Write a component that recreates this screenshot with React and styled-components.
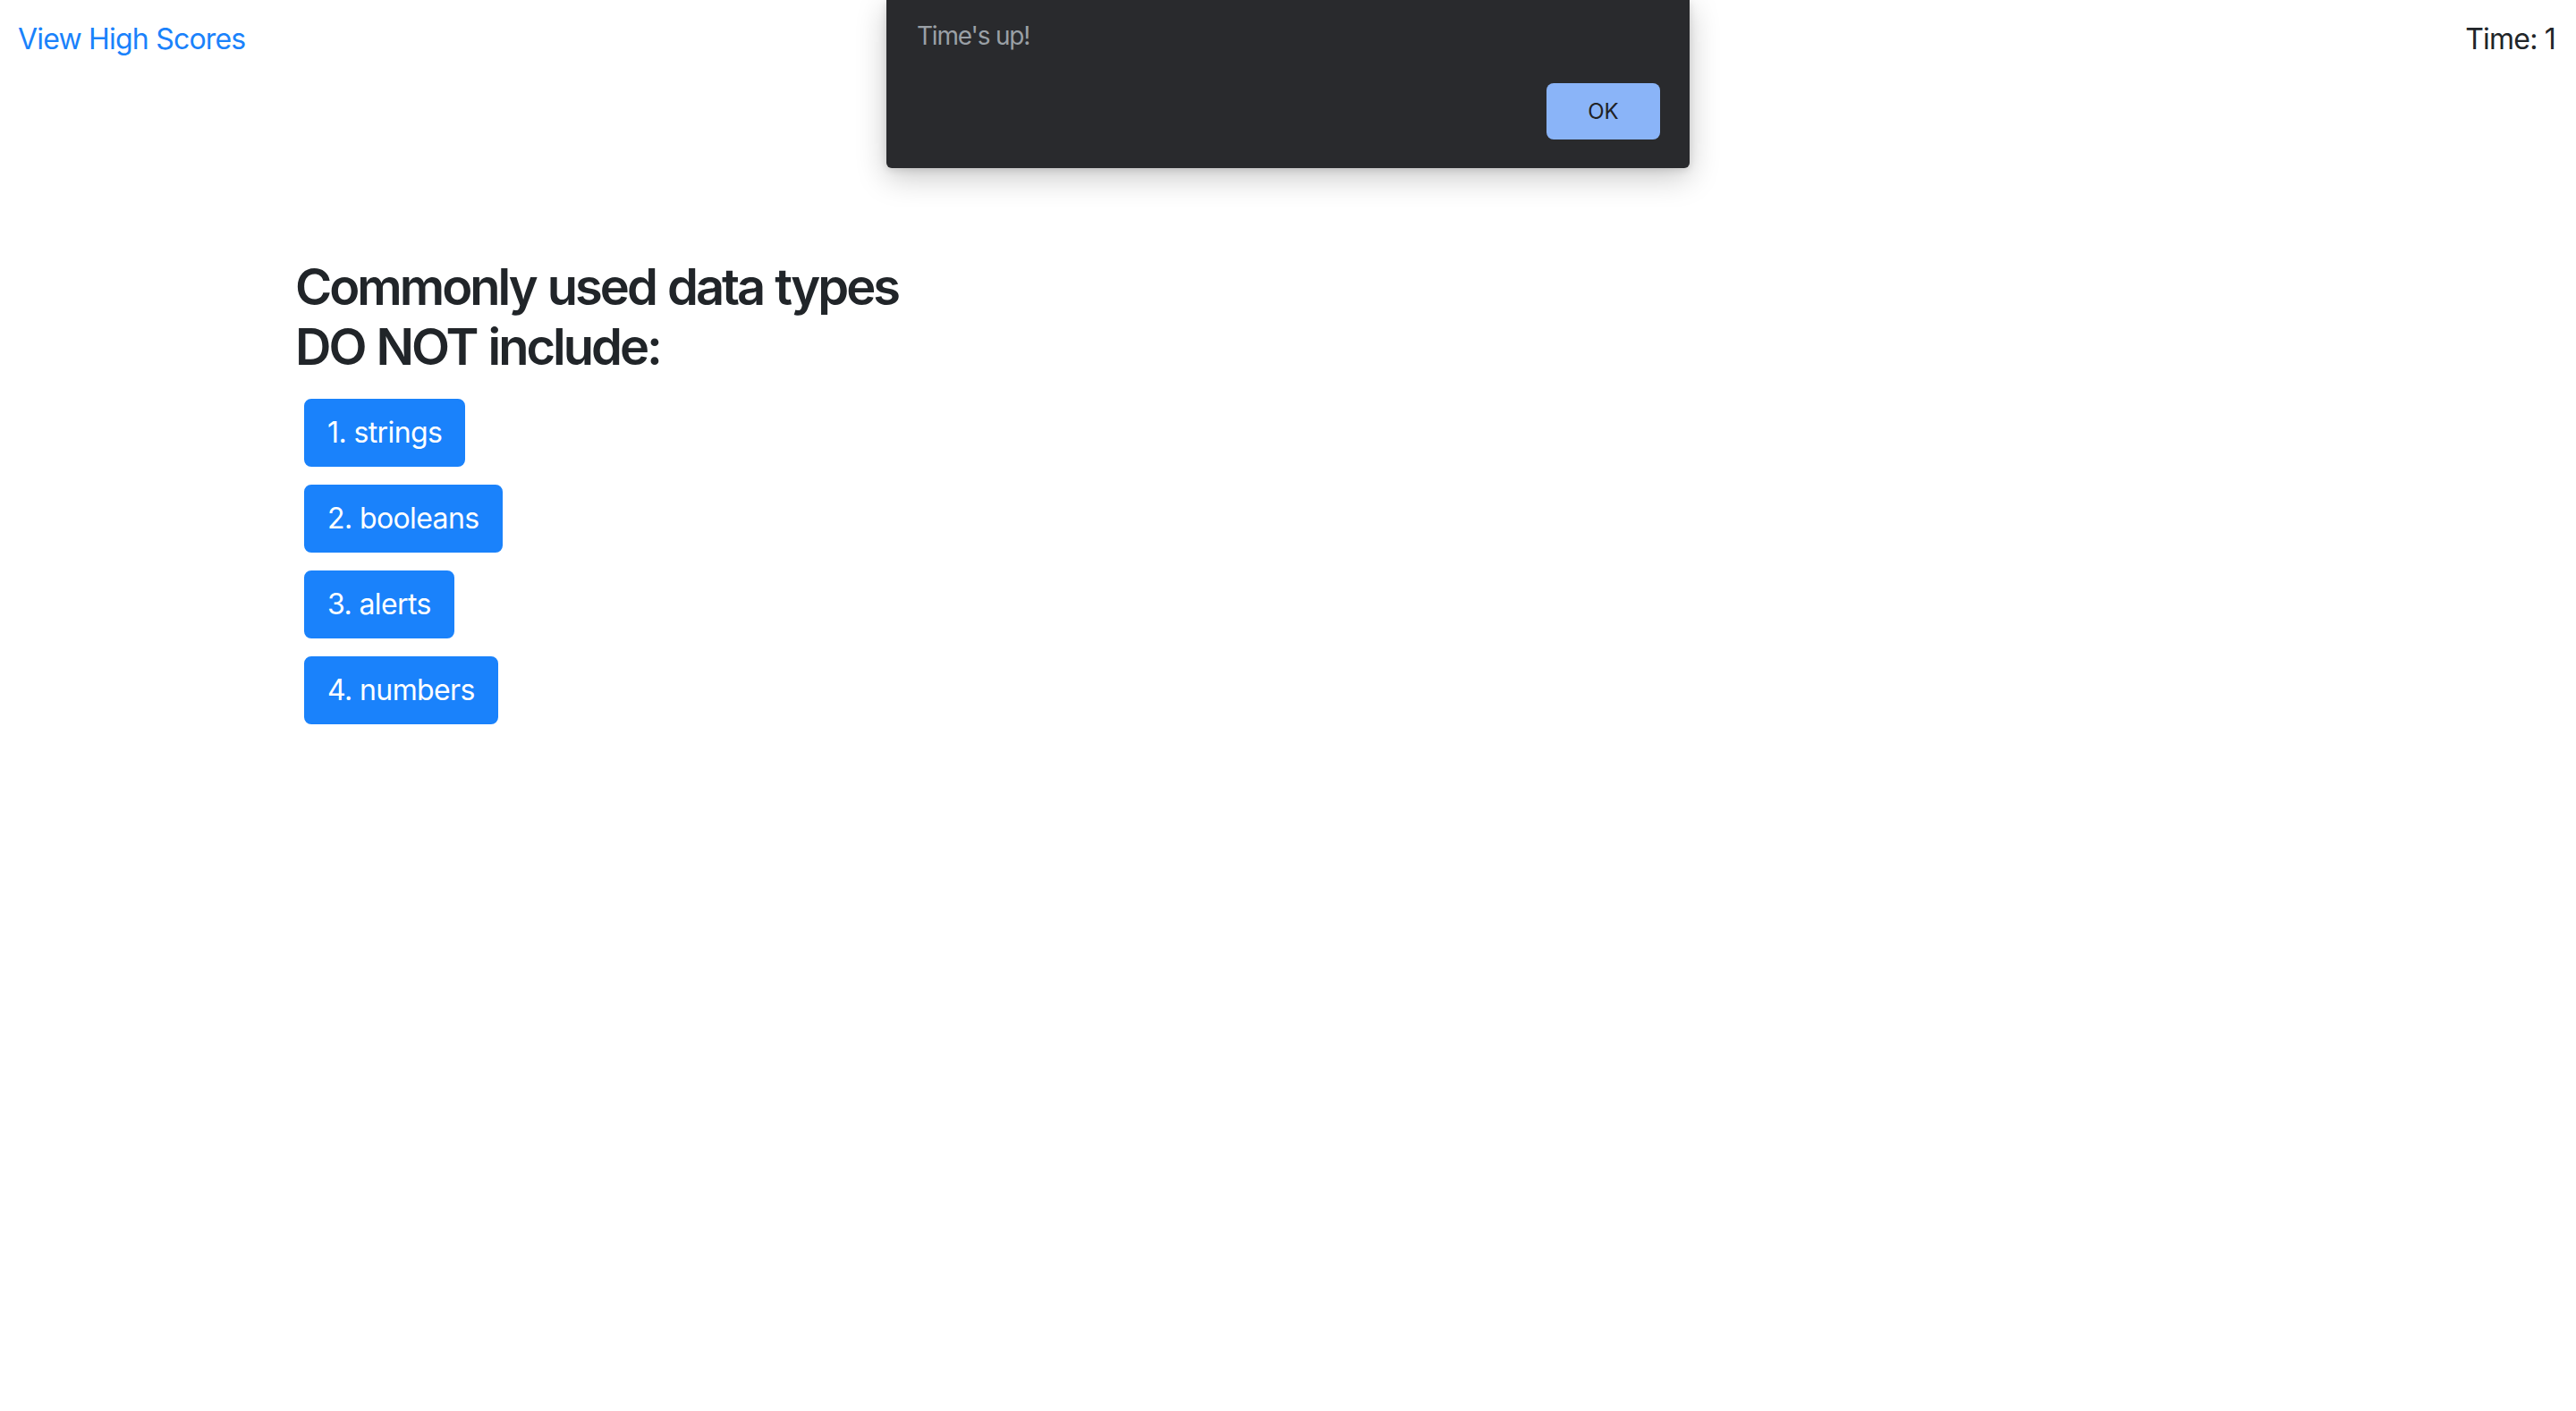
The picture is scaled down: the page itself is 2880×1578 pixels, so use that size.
import React from "react";
import styled, { createGlobalStyle } from "styled-components";

const GlobalStyle = createGlobalStyle`
  html, body {
    margin: 0;
    padding: 0;
    background: #ffffff;
  }
  body {
    font-family: Inter, "Noto Sans", "Liberation Sans", sans-serif;
    color: #212529;
  }
`;

const Page = styled.div`
  position: relative;
  min-height: 1578px;
`;

const TopBar = styled.header`
  display: flex;
  justify-content: space-between;
  align-items: flex-start;
  padding: 20px 23px 0 20px;
  font-size: 32px;
  line-height: 48px;
  letter-spacing: -0.8px;
`;

const ScoresLink = styled.a`
  color: #1a82fb;
  text-decoration: none;
  cursor: pointer;
`;

const Timer = styled.span`
  color: #212529;
`;

const Main = styled.main`
  padding: 220px 0 0 330px;
`;

const Question = styled.h3`
  margin: 0 0 24px;
  max-width: 720px;
  font-size: 56px;
  font-weight: 600;
  line-height: 1.2;
  letter-spacing: -3px;
  word-spacing: 2px;
  color: #212529;
`;

const Choices = styled.div`
  display: flex;
  flex-direction: column;
  align-items: flex-start;
  gap: 20px;
  padding-left: 10px;
`;

const ChoiceButton = styled.button`
  font-family: inherit;
  font-size: 32px;
  line-height: 48px;
  letter-spacing: -0.6px;
  padding: 12px 24px;
  border: 2px solid #1a82fb;
  border-radius: 8px;
  background: #1a82fb;
  color: #ffffff;
  cursor: pointer;
`;

const Dialog = styled.div`
  position: absolute;
  top: 0;
  left: 50%;
  transform: translateX(-50%);
  width: 898px;
  height: 188px;
  box-sizing: border-box;
  padding: 22px 33px 32px 34px;
  background: #292a2d;
  border-radius: 0 0 6px 6px;
  box-shadow: 0 10px 34px rgba(0, 0, 0, 0.22), 0 2px 8px rgba(0, 0, 0, 0.12);
  display: flex;
  flex-direction: column;
  justify-content: space-between;
`;

const DialogText = styled.p`
  margin: 0;
  font-size: 28px;
  line-height: 36px;
  letter-spacing: -1.2px;
  color: #9aa0a6;
`;

const DialogActions = styled.div`
  display: flex;
  justify-content: flex-end;
`;

const OkButton = styled.button`
  width: 127px;
  height: 63px;
  border: none;
  border-radius: 8px;
  background: #8ab4f8;
  color: #202124;
  font-family: inherit;
  font-size: 24px;
  cursor: pointer;
`;

const choices = ["1. strings", "2. booleans", "3. alerts", "4. numbers"];

export default function App() {
  return (
    <Page>
      <GlobalStyle />
      <TopBar>
        <ScoresLink>View High Scores</ScoresLink>
        <Timer>Time: 1</Timer>
      </TopBar>
      <Main>
        <Question>Commonly used data types DO NOT include:</Question>
        <Choices>
          {choices.map((c) => (
            <ChoiceButton key={c}>{c}</ChoiceButton>
          ))}
        </Choices>
      </Main>
      <Dialog>
        <DialogText>Time's up!</DialogText>
        <DialogActions>
          <OkButton>OK</OkButton>
        </DialogActions>
      </Dialog>
    </Page>
  );
}
